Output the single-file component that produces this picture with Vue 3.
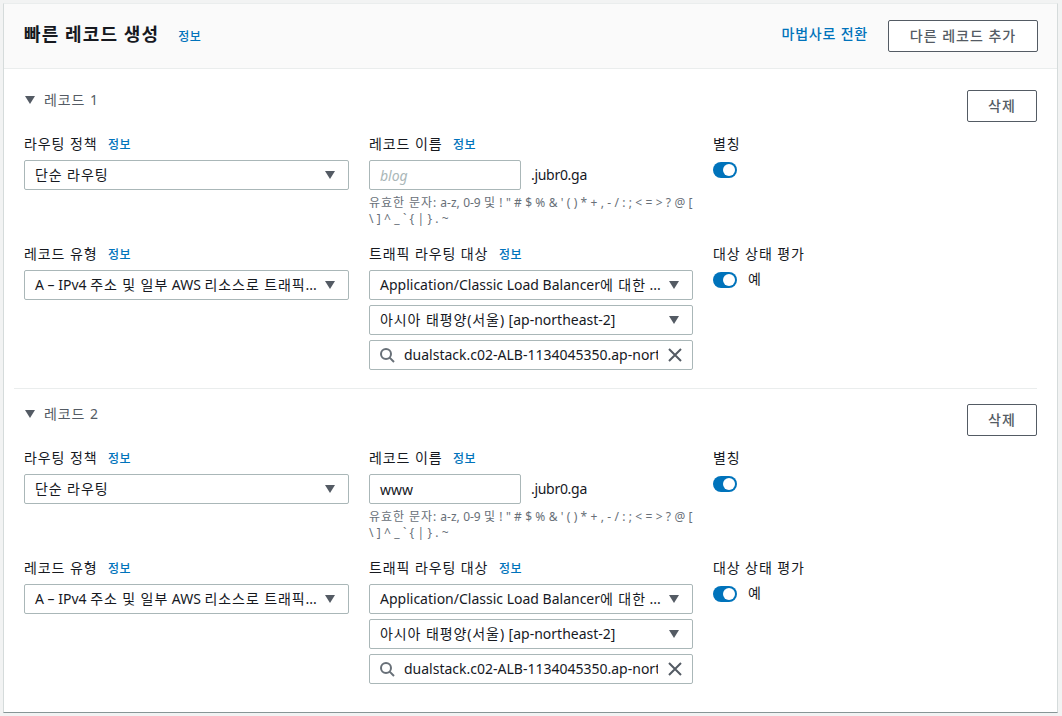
<script setup>
const records = [
  { id: 1, name: '', placeholder: 'blog' },
  { id: 2, name: 'www', placeholder: '' }
]
</script>

<template>
  <div class="page">
    <section class="card">
      <header class="head">
        <div class="head-left">
          <h2>빠른 레코드 생성</h2>
          <a class="info big">정보</a>
        </div>
        <div class="head-right">
          <a class="wizard">마법사로 전환</a>
          <button class="btn add">다른 레코드 추가</button>
        </div>
      </header>

      <div class="body">
        <article v-for="r in records" :key="r.id" class="record">
          <div class="rec-head">
            <div class="rec-title"><i class="caret small"></i><span>레코드 {{ r.id }}</span></div>
            <button class="btn del">삭제</button>
          </div>

          <div class="grid">
            <div class="field">
              <div class="label">라우팅 정책 <a class="info">정보</a></div>
              <div class="select"><span class="val ko">단순 라우팅</span><i class="caret"></i></div>
            </div>
            <div class="field">
              <div class="label">레코드 이름 <a class="info">정보</a></div>
              <div class="name-row">
                <div class="input" :class="{ ph: !r.name }">{{ r.name || r.placeholder }}</div>
                <span class="domain">.jubr0.ga</span>
              </div>
              <p class="hint"><span class="ko">유효한 문자:</span> a-z, 0-9 <span class="ko">및</span> ! " # $ % &amp; ' ( ) * + , - / : ; &lt; = &gt; ? @ [ \ ] ^ _ ` { | } . ~</p>
            </div>
            <div class="field">
              <div class="label">별칭</div>
              <div class="toggle-row"><span class="toggle"></span></div>
            </div>

            <div class="field">
              <div class="label">레코드 유형 <a class="info">정보</a></div>
              <div class="select"><span class="val">A – IPv4 <span class="ko">주소 및 일부</span> AWS <span class="ko">리소스로 트래픽</span>...</span><i class="caret"></i></div>
            </div>
            <div class="field">
              <div class="label">트래픽 라우팅 대상 <a class="info">정보</a></div>
              <div class="stack">
                <div class="select"><span class="val">Application/Classic Load Balancer<span class="ko">에 대한</span> ...</span><i class="caret"></i></div>
                <div class="select"><span class="val"><span class="ko">아시아 태평양(서울)</span> [ap-northeast-2]</span><i class="caret"></i></div>
                <div class="select search">
                  <svg class="ico" width="16" height="16" viewBox="0 0 16 16" fill="none" stroke="#687078" stroke-width="2"><circle cx="7" cy="7" r="5"/><path d="M10.6 10.6 15 15"/></svg>
                  <span class="clip">dualstack.c02-ALB-1134045350.ap-northeast-2.elb.amazonaws.com.</span>
                  <svg class="ico" width="16" height="16" viewBox="0 0 16 16" fill="none" stroke="#545b64" stroke-width="2"><path d="M2 2 14 14M14 2 2 14"/></svg>
                </div>
              </div>
            </div>
            <div class="field">
              <div class="label">대상 상태 평가</div>
              <div class="toggle-row"><span class="toggle"></span><span class="yes">예</span></div>
            </div>
          </div>
        </article>
      </div>
    </section>
  </div>
</template>

<style>
html, body { margin: 0; background: #f2f3f3; }
</style>

<style scoped>
.page {
  width: 1062px;
  height: 716px;
  box-sizing: border-box;
  padding: 3px 4px 3px 3px;
  background: #f2f3f3;
  font-family: "Noto Sans", "Noto Sans CJK KR", sans-serif;
  font-size: 14px;
  color: #16191f;
  overflow: hidden;
}
.ko { letter-spacing: .9px; }
.card {
  height: 710px;
  box-sizing: border-box;
  background: #fff;
  border-left: 1px solid #d5dbdb;
  border-right: 1px solid #d5dbdb;
  border-bottom: 1px solid #879596;
  border-top: 1px solid #eaeded;
  display: flex;
  flex-direction: column;
}
.head {
  height: 65px;
  box-sizing: border-box;
  background: #fafafa;
  border-bottom: 1px solid #eaeded;
  padding: 0 19px 0 20px;
  display: flex;
  align-items: center;
  justify-content: space-between;
}
.head-left { display: flex; align-items: center; gap: 19px; }
h2 {
  margin: 0 0 4px;
  font-size: 18px;
  font-weight: 700;
  line-height: 24px;
  letter-spacing: 1.1px;
}
.info {
  color: #0073bb;
  font-size: 12px;
  font-weight: 500;
  letter-spacing: .5px;
}
.label .info { margin-left: 6px; }
.head-right { display: flex; align-items: center; gap: 20px; }
.wizard { color: #0073bb; font-size: 14px; font-weight: 500; letter-spacing: .8px; margin-bottom: 6px; }
.btn {
  box-sizing: border-box;
  height: 32px;
  background: #fff;
  border: 1px solid #545b64;
  border-radius: 2px;
  color: #545b64;
  font: 500 14px "Noto Sans", "Noto Sans CJK KR", sans-serif;
  letter-spacing: 1px;
  padding: 0 0 3px;
}
.add { width: 150px; }
.del { width: 70px; padding-bottom: 2px; }
.body { padding: 0 20px 0 10px; }
.record { height: 320px; box-sizing: border-box; padding: 21px 0 0 10px; border-bottom: 1px solid #eaeded; }
.record + .record { height: auto; padding-top: 15px; border-bottom: 0; }
.rec-head { display: flex; justify-content: space-between; align-items: flex-start; height: 32px; }
.rec-title { display: flex; align-items: center; gap: 9px; height: 20px; line-height: 20px; color: #545b64; font-size: 14px; letter-spacing: .9px; }
.caret {
  display: block;
  flex: none;
  width: 0;
  height: 0;
  border-left: 5.5px solid transparent;
  border-right: 5.5px solid transparent;
  border-top: 8px solid #545b64;
}
.caret.small { margin-left: 1px; }
.grid {
  display: grid;
  grid-template-columns: 325px 324px 1fr;
  column-gap: 20px;
  margin-top: 12px;
}
.field:nth-child(1), .field:nth-child(2), .field:nth-child(3) { height: 110px; }
.label { line-height: 20px; height: 20px; margin-bottom: 6px; color: #16191f; white-space: nowrap; letter-spacing: .9px; }
.select, .input {
  box-sizing: border-box;
  height: 30px;
  border: 1px solid #aab7b8;
  border-radius: 2px;
  background: #fff;
  display: flex;
  align-items: center;
}
.select { padding: 0 13px 0 10px; gap: 10px; justify-content: space-between; }
.val { flex: 1; min-width: 0; white-space: nowrap; line-height: 20px; }
.stack { display: flex; flex-direction: column; gap: 5px; }
.search { padding: 0 9px; gap: 9px; }
.ico { flex: none; }
.clip { flex: 1; min-width: 0; overflow: hidden; white-space: nowrap; line-height: 20px; }
.name-row { display: flex; align-items: center; gap: 10px; }
.input { width: 152px; padding: 0 10px; }
.input.ph { color: #aab7b8; font-style: italic; }
.domain { line-height: 20px; letter-spacing: -.3px; }
.hint {
  margin: 5px 0 0;
  font-size: 12px;
  line-height: 16px;
  color: #687078;
  word-spacing: .2px;
}
.toggle-row { display: flex; align-items: center; gap: 11px; height: 20px; }
.toggle {
  display: block;
  position: relative;
  width: 24px;
  height: 16px;
  border-radius: 8px;
  background: #0073bb;
}
.toggle::after {
  content: "";
  position: absolute;
  right: 2px;
  top: 2px;
  width: 12px;
  height: 12px;
  border-radius: 50%;
  background: #fff;
}
.yes { line-height: 20px; color: #16191f; padding-bottom: 2px; }
</style>
